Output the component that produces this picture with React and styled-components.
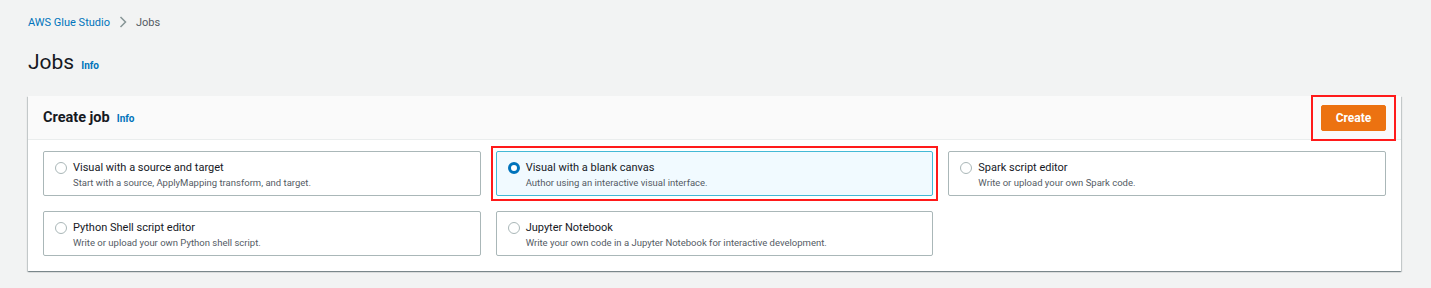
import React from 'react';
import styled, { createGlobalStyle } from 'styled-components';

const GlobalStyle = createGlobalStyle`
    body {
        margin: 0;
        background: #f2f3f3;
        font-family: Roboto, "Liberation Sans", Arial, sans-serif;
        color: #16191f;
    }
`;

const Page = styled.div`
    padding: 14px 30px 0 28px;
    height: 288px;
    box-sizing: border-box;
    overflow: hidden;
`;

const Breadcrumbs = styled.nav`
    display: flex;
    align-items: center;
    gap: 9px;
    font-size: 11px;
    height: 16px;
`;

const Crumb = styled.a`
    color: ${props => props.current ? '#545b64' : '#0073bb'};
    text-decoration: none;
`;

const HeadingRow = styled.div`
    display: flex;
    align-items: baseline;
    gap: 7px;
    margin-top: 17px;
    height: 32px;
`;

const Title = styled.h1`
    margin: 0;
    font-size: 21px;
    font-weight: 400;
    line-height: 30px;
`;

const InfoLink = styled.a`
    font-size: 10px;
    font-weight: 700;
    color: #0073bb;
`;

const Panel = styled.section`
    margin-top: 17px;
    background: #fff;
    box-shadow: 0 1px 1px 0 rgba(0, 28, 36, 0.3), 1px 1px 1px 0 rgba(0, 28, 36, 0.15), -1px 1px 1px 0 rgba(0, 28, 36, 0.15);
`;

const PanelHeader = styled.header`
    display: flex;
    align-items: center;
    justify-content: space-between;
    height: 43px;
    padding: 0 15px;
    background: #fafafa;
    border-bottom: 1px solid #eaeded;
`;

const PanelTitle = styled.div`
    display: flex;
    align-items: baseline;
    gap: 7px;
    h2 {
        margin: 0;
        font-size: 14.5px;
        font-weight: 700;
    }
`;

const Highlight = styled.div`
    outline: 2px solid #ff1a1a;
    outline-offset: ${props => props.offset || 4}px;
`;

const PrimaryButton = styled.button`
    background: #ec7211;
    color: #fff;
    border: 1px solid #ec7211;
    border-radius: 2px;
    font-family: inherit;
    font-size: 12px;
    font-weight: 700;
    width: 65px;
    height: 26px;
    padding: 0;
`;

const Tiles = styled.div`
    display: grid;
    grid-template-columns: repeat(3, 1fr);
    gap: 15px 15px;
    padding: 11px 15px 15px;
`;

const Tile = styled.label`
    display: flex;
    gap: 6px;
    height: 45px;
    box-sizing: border-box;
    padding: 8px 12px 0 11px;
    border: 1px solid ${props => props.selected ? '#44b9d6' : '#aab7b8'};
    background: ${props => props.selected ? '#f1faff' : '#fff'};
    border-radius: 2px;
`;

const Radio = styled.span`
    width: 12px;
    height: 12px;
    margin-top: 2px;
    flex: none;
    border-radius: 50%;
    box-sizing: border-box;
    border: ${props => props.checked ? '3.5px solid #0073bb' : '1px solid #aab7b8'};
    background: #fff;
`;

const TileText = styled.div`
    display: flex;
    flex-direction: column;
    gap: 1px;
`;

const TileTitle = styled.span`
    font-size: 11px;
    line-height: 15px;
    color: #16191f;
`;

const TileDesc = styled.span`
    font-size: 9.5px;
    line-height: 13px;
    color: #545b64;
`;

const options = [
    { title: 'Visual with a source and target', desc: 'Start with a source, ApplyMapping transform, and target.' },
    { title: 'Visual with a blank canvas', desc: 'Author using an interactive visual interface.', selected: true },
    { title: 'Spark script editor', desc: 'Write or upload your own Spark code.' },
    { title: 'Python Shell script editor', desc: 'Write or upload your own Python shell script.' },
    { title: 'Jupyter Notebook', desc: 'Write your own code in a Jupyter Notebook for interactive development.' },
];

const JobTile = ({ title, desc, selected }) => {
    const tile = (
        <Tile selected={selected}>
            <Radio checked={selected} />
            <TileText>
                <TileTitle>{title}</TileTitle>
                <TileDesc>{desc}</TileDesc>
            </TileText>
        </Tile>
    );
    return selected ? <Highlight offset={3}>{tile}</Highlight> : tile;
};

const App = () =>
    <Page>
        <GlobalStyle />
        <Breadcrumbs>
            <Crumb href="#">AWS Glue Studio</Crumb>
            <svg width="8" height="12" viewBox="0 0 8 12">
                <path d="M1.5 1l5 5-5 5" fill="none" stroke="#879596" strokeWidth="1.5" />
            </svg>
            <Crumb current>Jobs</Crumb>
        </Breadcrumbs>
        <HeadingRow>
            <Title>Jobs</Title>
            <InfoLink>Info</InfoLink>
        </HeadingRow>
        <Panel>
            <PanelHeader>
                <PanelTitle>
                    <h2>Create job</h2>
                    <InfoLink>Info</InfoLink>
                </PanelTitle>
                <Highlight offset={8}>
                    <PrimaryButton>Create</PrimaryButton>
                </Highlight>
            </PanelHeader>
            <Tiles>
                {options.map(o => <JobTile key={o.title} {...o} />)}
            </Tiles>
        </Panel>
    </Page>;

export default App;
